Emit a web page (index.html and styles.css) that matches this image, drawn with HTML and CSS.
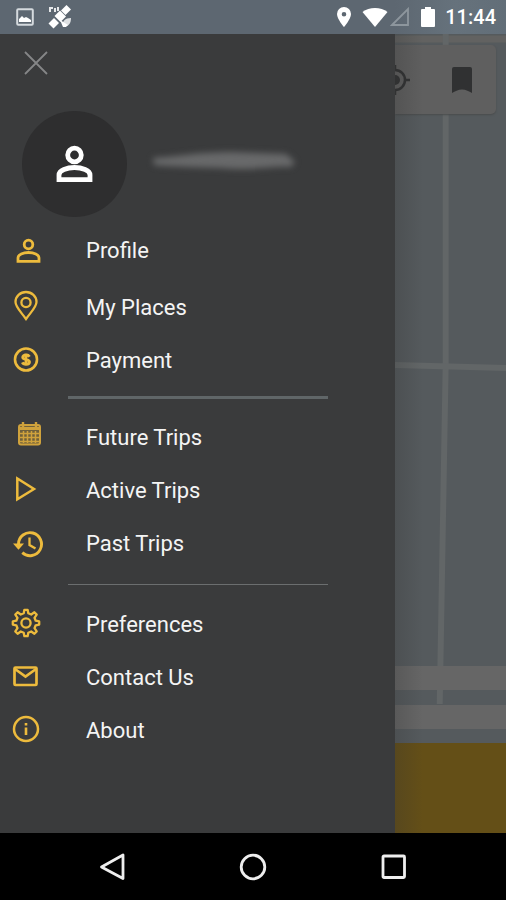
FILE: index.html
```html
<!DOCTYPE html>
<html lang="en">
<head>
<meta charset="utf-8">
<meta name="viewport" content="width=device-width, initial-scale=1">
<title>Menu</title>
<link rel="stylesheet" href="styles.css">
</head>
<body>
<div class="phone">
  <header class="status">
    <div class="status-side">
      <svg width="18" height="18" viewBox="0 0 18 18"><rect x="1.200" y="1.200" width="15.600" height="15.600" rx="1" fill="none" stroke="#d5dade" stroke-width="2"/><path d="M3 14v-3l3-3 2 2 2-1 2 1 3 2v2z" fill="#fff"/></svg>
      <svg width="24" height="24" viewBox="0 0 24 24" fill="#fff"><path d="M1 2h4v2H3v3H1zM6 3h2v4H6zM9 2h2v4H9z" opacity=".85"/><path d="M18.500 0l4.500 4.500-5.500 5.500-4.500-4.500z"/><path d="M12 5.500l6 6-5.500 5.500-6-6z"/><path d="M6 13l5 5-5.500 5.500-5-5z"/><path d="M15 21c-1-5 2-8 8-8 0 6-3 9-8 8z" opacity=".8"/><path d="M12 15l8 5-2 2h-3z"/></svg>
    </div>
    <div class="status-side status-right">
      <svg width="16" height="22" viewBox="0 0 16 22"><path fill="#fff" fill-rule="evenodd" d="M8 1a7 7 0 0 1 7 7c0 5-7 13-7 13S1 13 1 8a7 7 0 0 1 7-7zm0 5a2.300 2.300 0 1 0 0 4.600A2.300 2.300 0 0 0 8 6z"/></svg>
      <svg class="wifi" width="26" height="22" viewBox="0 0 26 22"><path fill="#fff" d="M13 21L.5 6C7 .5 19 .5 25.500 6z"/></svg>
      <svg width="20" height="20" viewBox="0 0 20 20"><path fill="none" stroke="#8d969d" stroke-width="1.800" d="M2 18L18 2v16z"/></svg>
      <svg class="battery" width="14" height="22" viewBox="0 0 14 22"><path fill="#fff" d="M4 1h6v2h3a1 1 0 0 1 1 1v16a1 1 0 0 1-1 1H1a1 1 0 0 1-1-1V4a1 1 0 0 1 1-1h3z"/></svg>
      <time class="clock">11:44</time>
    </div>
  </header>

  <main class="screen">
    <aside class="drawer">
      <button class="close" type="button" aria-label="Close menu">
        <svg width="24" height="24" viewBox="0 0 24 24"><path d="M1 1l22 22M23 1L1 23" fill="none" stroke="#858687" stroke-width="1.800"/></svg>
      </button>
      <div class="account">
        <div class="avatar">
          <svg width="38" height="38" viewBox="0 0 38 38" fill="none" stroke="#fff" stroke-width="4.800"><circle cx="18.500" cy="10" r="6.800"/><path d="M3 34.600v-4.600c0-4.500 8-7.500 15.500-7.500s15.500 3 15.500 7.500v4.600z"/></svg>
        </div>
        <svg class="name" width="156" height="34" viewBox="0 0 156 34"><path d="M6 11C35 9 52 5 85 5l54 2 9 8-4 5c-20-1-40 4-70 1-25-1-45-1-67-3z"/></svg>
      </div>

      <nav aria-label="Main">
        <ul class="group">
          <li class="first"><a href="#profile"><svg class="icon" viewBox="0 0 36 53"><g stroke-width="2.800"><circle cx="20.500" cy="20.500" r="4.300"/><path d="M10 37.300v-3.500c0-3 5-5.300 10.500-5.300s10.500 2.300 10.500 5.300v3.500z"/></g></svg>Profile</a></li>
          <li><a href="#places"><svg class="icon" viewBox="0 0 36 53"><path d="M18 38C13 31 7.500 26 7.500 21a10.500 10 0 0 1 21 0c0 5-5.500 10-10.500 17z" stroke-width="2.300"/><circle cx="18" cy="21.500" r="4.600" stroke-width="2.300"/></svg>My Places</a></li>
          <li><a href="#payment"><svg class="icon" viewBox="0 0 36 53"><circle cx="18" cy="25.500" r="11" stroke-width="2.600"/><path d="M21.500 22.700c-.8-1.400-2-1.700-3.500-1.700-2 0-3.300.8-3.300 2.300 0 3.200 6.800 1.500 6.800 4.700 0 1.500-1.500 2.300-3.500 2.300-1.700 0-3-.5-3.700-1.900M18 19.500v12.200" stroke-width="2.800"/></svg>Payment</a></li>
        </ul>
        <hr class="rule thick">
        <ul class="group">
          <li><a href="#future"><svg class="icon" viewBox="0 0 36 53"><g stroke="#cfa23c"><rect x="11" y="14" width="21" height="19.500" rx="2" fill="#70613b"/><path d="M15 11v5M28 11v5" stroke-width="2.400"/><path d="M11 17.500h21" stroke-width="3"/><path d="M12 22.500h19M12 26.500h19M12 30.500h19M15.500 20v12M19.500 20v12M23.500 20v12M27.500 20v12" stroke-width="1.500"/></g></svg>Future Trips</a></li>
          <li><a href="#active"><svg class="icon" viewBox="0 0 36 53"><path d="M9.300 14.500v20.800L26 25z" stroke-width="2.500"/></svg>Active Trips</a></li>
          <li><a href="#past"><svg class="icon" viewBox="0 0 36 53"><path d="M10.500 27a11.500 11.500 0 1 1 3.800 8.700" stroke-width="2.900"/><path d="M5 26.500h11l-5.500 6.300z" fill="#edbb3d" stroke="none"/><path d="M21.500 20.500V28l6 3.500" stroke-width="2.300"/></svg>Past Trips</a></li>
        </ul>
        <hr class="rule">
        <ul class="group">
          <li><a href="#preferences"><svg class="icon" viewBox="0 0 36 53"><g transform="translate(18 25)" stroke-width="2.300"><path stroke-linejoin="round" d="M-2.300-9.700L-1.600-13.200H1.600L2.300-9.700L5.200-8.500L8.400-10.700L10.700-8.400L8.500-5.200L9.700-2.300L13.200-1.600V1.600L9.700 2.300L8.500 5.200L10.700 8.400L8.400 10.700L5.200 8.500L2.300 9.700L1.600 13.200H-1.600L-2.300 9.700L-5.200 8.500L-8.400 10.700L-10.700 8.400L-8.500 5.200L-9.700 2.300L-13.200 1.600V-1.600L-9.700-2.300L-8.500-5.200L-10.700-8.400L-8.400-10.700L-5.200-8.500Z"/><circle r="4.600"/></g></svg>Preferences</a></li>
          <li><a href="#contact"><svg class="icon" viewBox="0 0 36 53"><rect x="6.500" y="16.500" width="22" height="17.500" rx="1" stroke-width="2.700"/><path d="M7 18l10.500 7.500L28 18" stroke-width="2.700"/></svg>Contact Us</a></li>
          <li><a href="#about"><svg class="icon" viewBox="0 0 36 53"><circle cx="18" cy="25" r="12" stroke-width="2.500"/><path d="M18 19v2.500M18 23.500v7.500" stroke-width="2.600"/></svg>About</a></li>
        </ul>
      </nav>
    </aside>

    <section class="pane" aria-label="Map">
      <svg class="map" viewBox="0 0 112 709" preserveAspectRatio="none">
        <path d="M0 5h112" stroke="#626261" stroke-width="7"/>
        <path d="M51 0v330L45 670" stroke="#626667" stroke-width="6" fill="none"/>
        <path d="M0 331l112 3" stroke="#626667" stroke-width="6"/>
        <path d="M0 632h112v24H0zM0 671h112v24H0z" fill="#666"/>
      </svg>
      <div class="toolbar">
        <button class="locate" type="button" aria-label="My location">
          <svg width="30" height="30" viewBox="0 0 30 30" fill="none" stroke="#303132"><circle cx="15" cy="15" r="10" stroke-width="2.500"/><circle cx="15" cy="15" r="5" fill="#303132" stroke="none"/><path d="M15 0v5M15 25v5M0 15h5M25 15h5" stroke-width="2.500"/></svg>
        </button>
        <button class="bookmark" type="button" aria-label="Bookmarks">
          <svg width="20" height="26" viewBox="0 0 20 26"><path fill="#303132" d="M2 0h16a2 2 0 0 1 2 2v24c-3-1.500-6-3.500-10-3.500S3 24.500 0 26V2a2 2 0 0 1 2-2z"/></svg>
        </button>
      </div>
      <div class="action"></div>
    </section>
  </main>

  <footer class="navbar">
    <button type="button" aria-label="Back"><svg width="28" height="28" viewBox="0 0 28 28"><path d="M25 2v23.500L3.500 14z"/></svg></button>
    <button type="button" aria-label="Home"><svg width="28" height="28" viewBox="0 0 28 28"><circle cx="14" cy="14" r="11.800"/></svg></button>
    <button type="button" aria-label="Recent apps"><svg width="28" height="28" viewBox="0 0 28 28"><rect x="3" y="3" width="21.500" height="21.500" rx="1"/></svg></button>
  </footer>
</div>
</body>
</html>
```
FILE: styles.css
```css
* {
  box-sizing: border-box;
}

body {
  margin: 0;
  background: #000;
  color: #f4f4f4;
  font-family: Roboto, "Liberation Sans", sans-serif;
}

button {
  padding: 0;
  border: 0;
  background: none;
  display: flex;
  align-items: center;
  justify-content: center;
}

svg {
  display: block;
  flex: none;
}

.phone {
  min-height: 100vh;
  display: flex;
  flex-direction: column;
}

.status {
  height: 34px;
  padding: 0 10px 0 16px;
  display: flex;
  align-items: center;
  justify-content: space-between;
  background: linear-gradient(90deg, #5d6771 0 78%, #66727c 90%, #626e78);
}

.status-side {
  display: flex;
  align-items: center;
  gap: 14px;
}

.status-right {
  gap: 0;
}

.wifi {
  margin: 0 2px 0 10px;
}

.battery {
  margin: 0 10px 0 11px;
}

.clock {
  color: #fff;
  font-size: 20px;
  font-weight: 500;
  line-height: 36px;
}

.screen {
  flex: 1;
  display: grid;
  grid-template-columns: 78fr 22fr;
}

.drawer {
  min-width: 0;
  padding-bottom: 76px;
  background: #3a3b3c;
}

.close {
  width: 48px;
  height: 58px;
  margin-left: 12px;
}

.account {
  display: flex;
  align-items: center;
  gap: 20px;
  padding: 19px 0 7px 22px;
}

.avatar {
  width: 105px;
  height: 106px;
  flex: none;
  display: grid;
  place-items: center;
  border-radius: 50%;
  background: #2e2e2f;
}

.name {
  fill: #68696a;
  filter: blur(3px);
}

.group {
  margin: 0;
  padding: 0;
  list-style: none;
}

.group a {
  height: 53px;
  padding-left: 8px;
  display: flex;
  align-items: center;
  gap: 42px;
  color: inherit;
  font-size: 22px;
  line-height: 28px;
  text-decoration: none;
}

.first {
  margin-bottom: 4px;
}

.icon {
  width: 36px;
  height: 53px;
  fill: none;
  stroke: #edbb3d;
  stroke-width: 2;
}

.rule {
  height: 1px;
  margin: 14px 17% 13px 68px;
  border: 0;
  background: #6b6e6f;
}

.rule.thick {
  height: 3px;
  margin: 9px 17% 12px 68px;
  background: #606668;
}

.pane {
  position: relative;
  min-width: 0;
  overflow: hidden;
  display: flex;
  flex-direction: column;
  justify-content: space-between;
  background: #555a5d;
}

.pane::after {
  content: "";
  position: absolute;
  inset: 0 auto 0 0;
  width: 28px;
  background: linear-gradient(90deg, rgba(50, 50, 50, 0.25), rgba(50, 50, 50, 0));
}

.map {
  position: absolute;
  inset: 0 0 90px;
  width: 100%;
  height: calc(100% - 90px);
}

.toolbar {
  position: relative;
  height: 69px;
  margin: 11px 10px 0 0;
  display: flex;
  align-items: center;
  justify-content: space-between;
  border-radius: 0 5px 5px 0;
  background: #5f5f5f;
  box-shadow: 0 1px 2px #4a4c4d;
}

.locate {
  margin-left: -15px;
}

.bookmark {
  width: 68px;
  height: 68px;
}

.action {
  position: relative;
  height: 90px;
  background: #644f17;
}

.navbar {
  height: 67px;
  padding: 0 98px;
  display: flex;
  align-items: center;
  justify-content: space-between;
  background: #000;
  fill: none;
  stroke: #eee;
  stroke-width: 2.800;
  stroke-linejoin: round;
}
```
